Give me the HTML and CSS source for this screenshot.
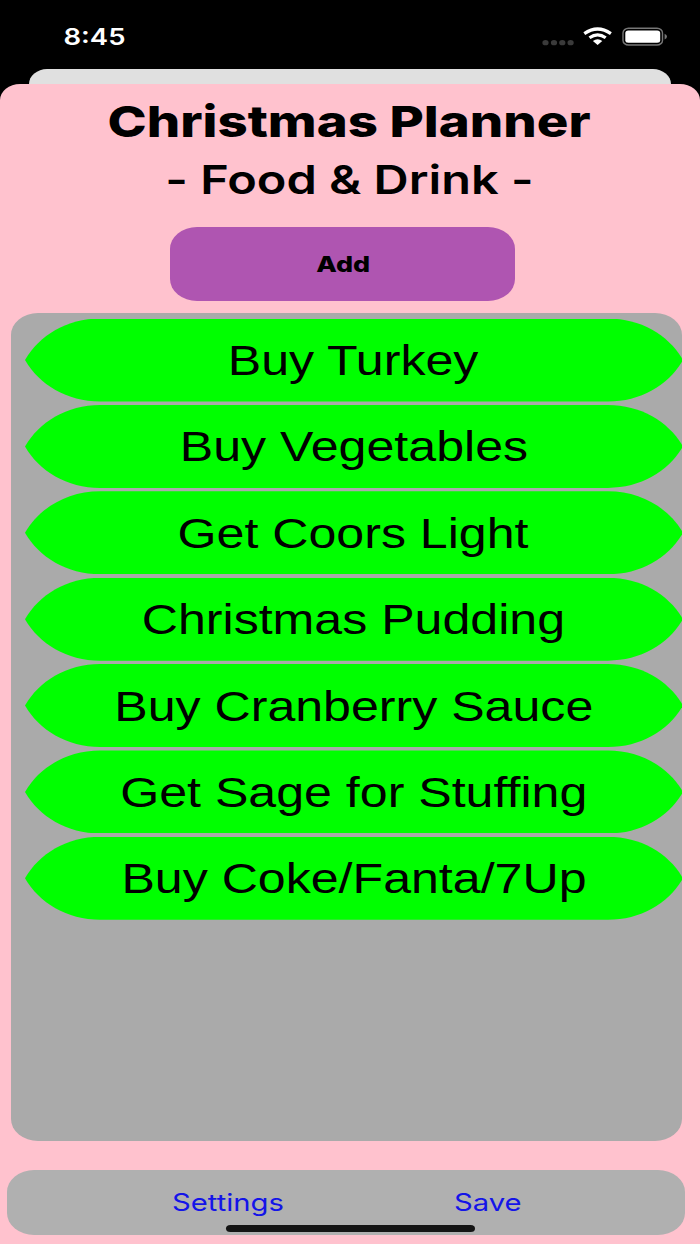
FILE: index.html
```
<!DOCTYPE html>
<html lang="en">
  <head>
    <meta charset="UTF-8" />
    <meta name="viewport" content="width=device-width, initial-scale=1.0" />
    <title>Christmas Planner</title>
    <link rel="stylesheet" href="styles.css">
  </head>
  <body>
    <header class="status">
      <span class="clock wide">8:45</span>
      <svg class="status-icons" width="126" height="22" viewBox="0 0 126 22">
        <g fill="#3a3a3a">
          <ellipse cx="3.5" cy="15.7" rx="3.1" ry="2.6" />
          <ellipse cx="12" cy="15.7" rx="3.1" ry="2.6" />
          <ellipse cx="20.3" cy="15.7" rx="3.1" ry="2.6" />
          <ellipse cx="28.6" cy="15.7" rx="3.1" ry="2.6" />
        </g>
        <g fill="none" stroke="#fff" stroke-width="3.2">
          <path d="M42.3 6.6 Q55.6 -2.6 68.9 6.6" />
          <path d="M47.5 10.8 Q55.6 4.8 63.7 10.8" />
        </g>
        <path d="M50.9 13.9 Q55.6 10.8 60.3 13.9 L55.6 18 Z" fill="#fff" />
        <rect x="81" y="1.3" width="39.5" height="16.7" rx="5.5" ry="4.6" fill="none" stroke="#777" stroke-width="1.4" />
        <rect x="83.3" y="3.6" width="34.9" height="12.2" rx="3" ry="2.5" fill="#fff" />
        <path d="M122.6 6.7 Q125 7.6 125 9.6 Q125 11.6 122.6 12.5 Z" fill="#777" />
      </svg>
    </header>
    <div class="back-sheet"></div>
    <main class="sheet">
      <h1 class="title wide">Christmas Planner</h1>
      <h2 class="subtitle wide">- Food &amp; Drink -</h2>
      <button class="add"><span class="wide">Add</span></button>
      <ul class="list">
        <li class="item"><span class="wide">Buy Turkey</span></li>
        <li class="item"><span class="wide">Buy Vegetables</span></li>
        <li class="item"><span class="wide">Get Coors Light</span></li>
        <li class="item"><span class="wide">Christmas Pudding</span></li>
        <li class="item"><span class="wide">Buy Cranberry Sauce</span></li>
        <li class="item"><span class="wide">Get Sage for Stuffing</span></li>
        <li class="item"><span class="wide">Buy Coke/Fanta/7Up</span></li>
      </ul>
      <nav class="toolbar">
        <a class="link"><span class="wide">Settings</span></a>
        <a class="link"><span class="wide">Save</span></a>
      </nav>
      <div class="home-bar"></div>
    </main>
  </body>
</html>
```
FILE: styles.css
```
* {
  box-sizing: border-box;
}

body {
  display: flex;
  flex-direction: column;
  height: 1244px;
  margin: 0;
  overflow: hidden;
  background: #000;
  color: #000;
  font-family: Inter, sans-serif;
}

/* all the lettering is stretched sideways */
.wide {
  display: block;
  white-space: nowrap;
  transform: scaleX(1.218);
}

.status {
  display: flex;
  justify-content: space-between;
  height: 69px;
  padding: 27px 32.5px 0 68.5px;
}

.clock {
  color: #fff;
  font-size: 22.6px;
  font-weight: 600;
  line-height: 20px;
}

.back-sheet {
  height: 15px;
  margin: 0 29px;
  border-radius: 18px 18px 0 0 / 15px 15px 0 0;
  background: #e0e0e0;
}

.sheet {
  position: relative;
  display: flex;
  flex: 1;
  flex-direction: column;
  border-radius: 20px 20px 0 0 / 16px 16px 0 0;
  background: #ffc2ce;
}

.title {
  align-self: center;
  margin: 13px 2px 0 0;
  font-size: 43px;
  font-weight: 800;
  line-height: 48px;
  transform: scaleX(1.226);
}

.subtitle {
  align-self: center;
  margin: 13px 1px 0 0;
  font-size: 40px;
  font-weight: 600;
  font-feature-settings: "calt" 0;
  line-height: 44px;
  transform: scaleX(1.216);
}

.add {
  display: flex;
  align-items: center;
  justify-content: center;
  width: 344.5px;
  height: 73.5px;
  margin: 25px 0 0 170.4px;
  padding: 0;
  border: 0;
  border-radius: 27px / 22px;
  background: #af55b1;
  color: #000;
  font-family: inherit;
  font-size: 22px;
  font-weight: 800;
}

.list {
  display: flex;
  flex-direction: column;
  gap: 3.4px;
  width: 671px;
  height: 828px;
  margin: 12px 0 0 11px;
  padding: 6px 0 0 14px;
  overflow: hidden;
  border-radius: 27px / 22px;
  background: #aaa;
  list-style: none;
}

.item {
  display: flex;
  align-items: center;
  justify-content: center;
  height: 83px;
  padding-top: 2px;
  background: #0f0;
  clip-path: path("M0 41.5 C14 17 42 0 75 0 H583 C616 0 644 17 658 41.5 C644 66 616 83 583 83 H75 C42 83 14 66 0 41.5 Z");
  font-family: "Liberation Sans", Arial, sans-serif;
  font-size: 42px;
}

.item .wide {
  transform: scaleX(1.193);
}

.toolbar {
  display: flex;
  width: 678px;
  height: 65px;
  margin: 29.5px 0 0 7.4px;
  padding: 18px 68px 0 91px;
  border-radius: 27px / 22px;
  background: #b0b0b0;
}

.link {
  display: flex;
  flex: 1;
  justify-content: center;
  color: #1414e8;
  font-size: 24px;
  line-height: 29px;
}

.home-bar {
  position: absolute;
  bottom: 12px;
  left: 226px;
  width: 249px;
  height: 7.5px;
  border-radius: 5px / 4px;
  background: #141414;
}
```
